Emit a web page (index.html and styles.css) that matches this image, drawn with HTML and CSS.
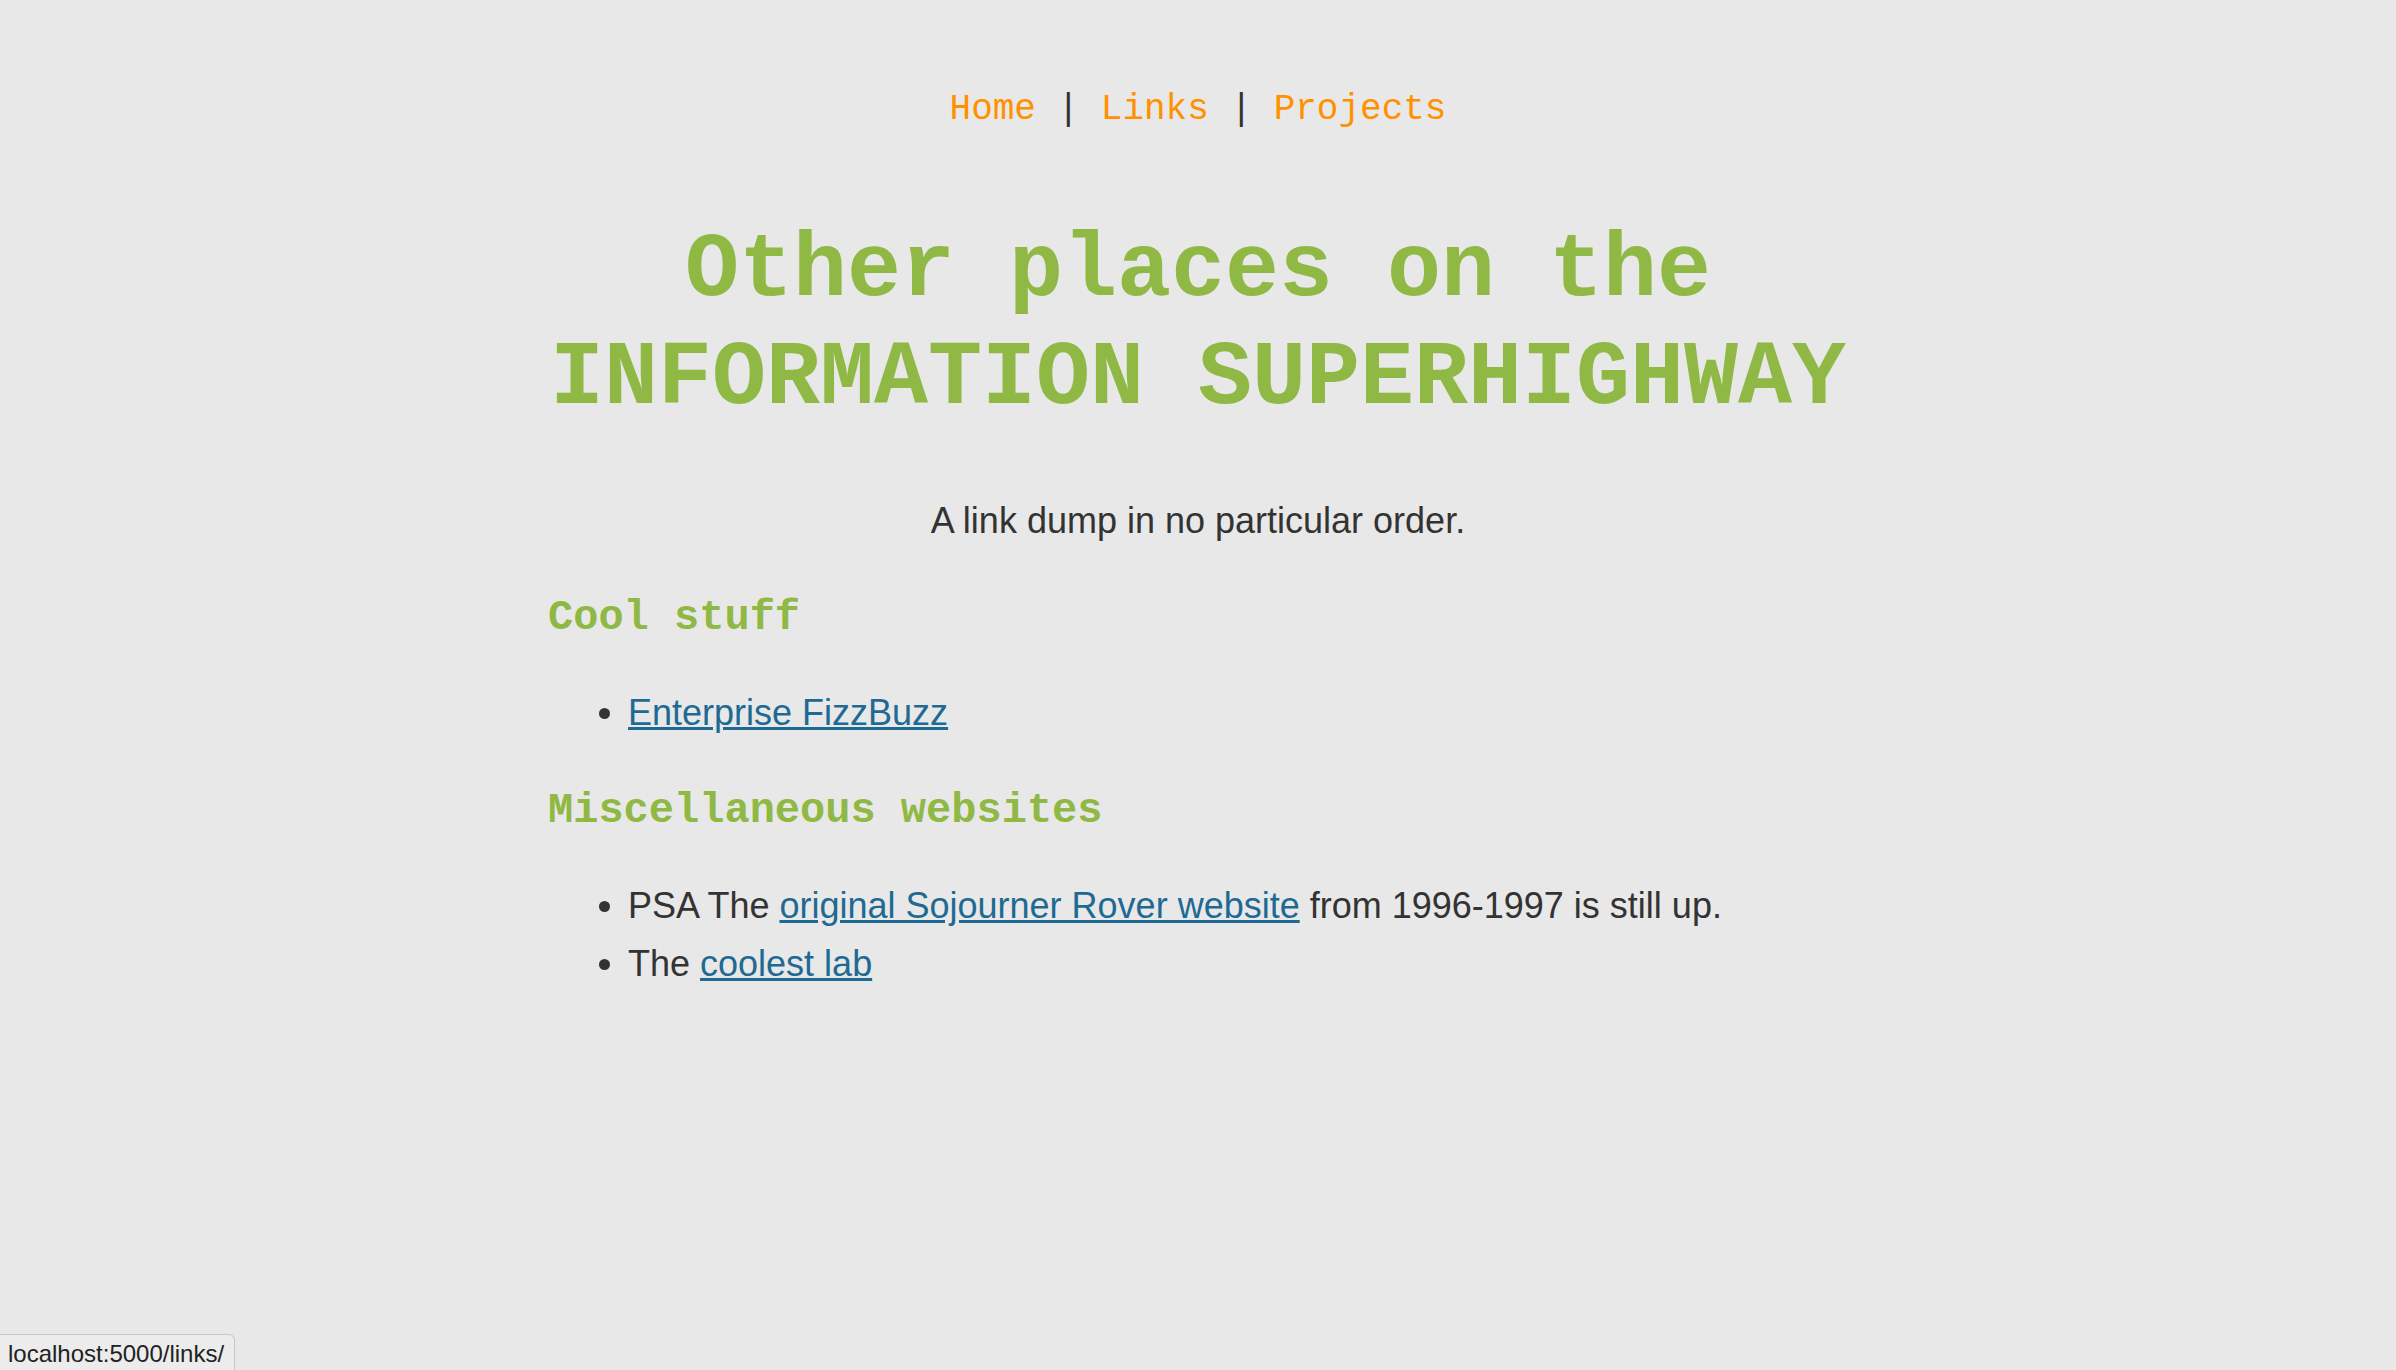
FILE: index.html
```html
<!DOCTYPE html>
<html lang="en">
<head>
<meta charset="utf-8">
<title>Links</title>
<link rel="stylesheet" href="styles.css">
</head>
<body>
<nav class="nav"><a class="nav-link" href="#">Home</a><span class="sep"> | </span><a class="nav-link" href="#">Links</a><span class="sep"> | </span><a class="nav-link" href="#">Projects</a></nav>
<main class="page">
  <h1 class="title">Other places on the<br>INFORMATION SUPERHIGHWAY</h1>
  <p class="lead">A link dump in no particular order.</p>
  <h2 class="section">Cool stuff</h2>
  <ul class="list">
    <li><a href="#">Enterprise FizzBuzz</a></li>
  </ul>
  <h2 class="section">Miscellaneous websites</h2>
  <ul class="list">
    <li>PSA The <a href="#">original Sojourner Rover website</a> from 1996-1997 is still up.</li>
    <li>The <a href="#">coolest lab</a></li>
  </ul>
</main>
<div class="status">localhost:5000/links/</div>
</body>
</html>
```
FILE: styles.css
```css
html, body {
  margin: 0;
  padding: 0;
}
body {
  background: #e8e8e8;
  color: #333333;
  font-family: "Liberation Sans", Arial, sans-serif;
  font-size: 36px;
  line-height: 1.6;
  min-height: 1370px;
}
.nav {
  padding-top: 81px;
  text-align: center;
  font-family: "Liberation Mono", "Courier New", monospace;
  font-size: 36px;
  white-space: pre;
}
.nav-link {
  color: #ff9100;
  text-decoration: none;
}
.sep {
  color: #333333;
}
.page {
  width: 1300px;
  margin: 0 auto;
}
.title {
  margin: 78px 0 59px;
  font-family: "Liberation Mono", "Courier New", monospace;
  font-weight: bold;
  font-size: 90px;
  line-height: 108px;
  color: #8fb944;
  text-align: center;
}
.lead {
  margin: 0;
  text-align: center;
}
.section {
  margin: 36px 0 32px;
  font-family: "Liberation Mono", "Courier New", monospace;
  font-weight: bold;
  font-size: 42px;
  line-height: 1.6;
  color: #8fb944;
}
.list {
  margin: 0;
  padding-left: 80px;
}
.list a {
  color: #1e6a93;
  text-decoration: underline;
}
.status {
  position: fixed;
  left: 0;
  bottom: 0;
  height: 35px;
  line-height: 37px;
  padding: 0 10px 0 8px;
  background: #ececec;
  border: 1px solid #c8c8c8;
  border-left: none;
  border-bottom: none;
  border-top-right-radius: 6px;
  font-family: "Liberation Sans", Arial, sans-serif;
  font-size: 24px;
  color: #222222;
}
```
